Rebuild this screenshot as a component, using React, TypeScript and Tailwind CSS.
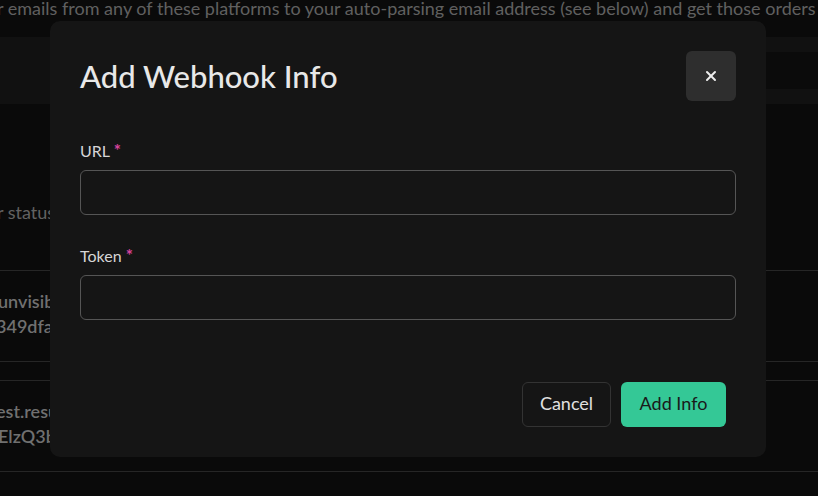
import React from 'react';
import { X } from 'lucide-react';

const font = { fontFamily: 'Lato, "Noto Sans", sans-serif' };

const Field: React.FC<{ label: string }> = ({ label }) => (
  <div className="flex flex-col">
    <label className="text-[16px] text-[#d6d6d6] leading-[20px]">
      {label} <span className="text-[17px] font-bold text-[#d8449e]">*</span>
    </label>
    <input
      className="mt-[9px] h-[45px] w-full rounded-[6px] border border-[#555] bg-transparent px-3 text-[#ddd] outline-none"
      type="text"
    />
  </div>
);

export default function App() {
  return (
    <div className="relative h-[496px] w-[818px] overflow-hidden bg-[#0a0a0a]" style={font}>
      {/* page behind the dialog */}
      <div className="flex flex-col">
        <p className="-ml-[3px] h-[37px] whitespace-nowrap text-[18px] leading-[17px] text-[#606060]">
          r emails from any of these platforms to your auto-parsing email address (see below) and get those orders
        </p>
        <div className="flex h-[67px] items-start bg-[#111111] pt-[15px] pl-[420px]">
          <div className="h-[37px] flex-1 bg-[#0b0b0b]" />
        </div>
        <div className="flex h-[166px] items-center pb-[0px] pt-[50px]">
          <span className="-ml-[3px] whitespace-nowrap text-[18px] text-[#626262]">r status</span>
        </div>
        <div className="flex h-[91px] flex-col justify-center border-t border-[#262626] pb-[4px] text-[18px] font-semibold leading-[25px] text-[#707070]">
          <span className="-ml-[2px] whitespace-nowrap">unvisible</span>
          <span className="-ml-[4px] whitespace-nowrap">349dfa</span>
        </div>
        <div className="h-[19px] border-t border-[#262626]" />
        <div className="flex h-[91px] flex-col justify-center border-t border-[#262626] pb-[4px] text-[18px] font-semibold leading-[25px] text-[#707070]">
          <span className="-ml-[4px] whitespace-nowrap">est.result</span>
          <span className="-ml-[2px] whitespace-nowrap">ElzQ3b</span>
        </div>
        <div className="h-[25px] border-t border-[#262626]" />
      </div>

      {/* dialog */}
      <div className="absolute inset-0 flex justify-start pl-[50px] pt-[21px]">
        <div className="flex h-[436px] w-[716px] flex-col rounded-[10px] bg-[#151515] px-[30px] pt-[30px]">
          <div className="flex items-center justify-between">
            <h2 className="text-[31px] font-medium leading-[50px] text-[#e8e8e8]">Add Webhook Info</h2>
            <button className="flex h-[50px] w-[50px] items-center justify-center rounded-[6px] bg-[#2e2e2e] text-[#eee]">
              <X size={16} strokeWidth={3} />
            </button>
          </div>
          <div className="mt-[40px] flex flex-col gap-[31px]">
            <Field label="URL" />
            <Field label="Token" />
          </div>
          <div className="mt-[62px] flex justify-end gap-[10px] pr-[10px]">
            <button className="h-[45px] w-[89px] rounded-[6px] border border-[#333] pb-[2px] text-[18px] text-[#e0e0e0]">
              Cancel
            </button>
            <button className="h-[45px] w-[105px] rounded-[6px] bg-[#34c896] pb-[2px] text-[18px] text-[#1a1a1a]">
              Add Info
            </button>
          </div>
        </div>
      </div>
    </div>
  );
}
